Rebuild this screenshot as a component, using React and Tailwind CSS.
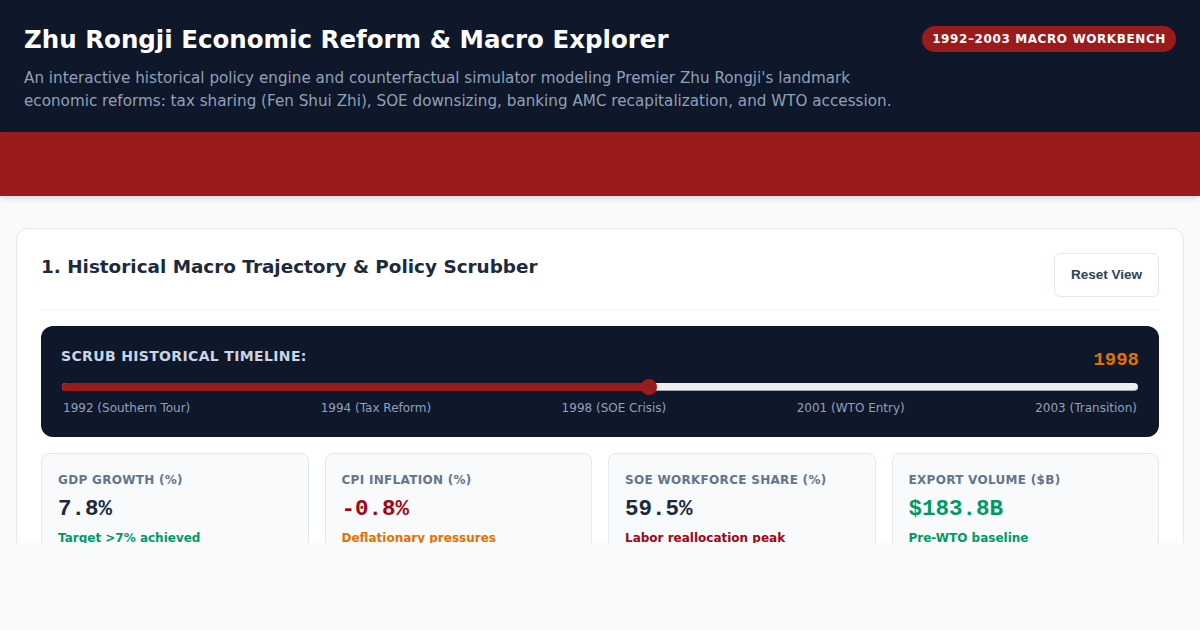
import React, { useState } from "react";

const milestones = [
  "1992 (Southern Tour)",
  "1994 (Tax Reform)",
  "1998 (SOE Crisis)",
  "2001 (WTO Entry)",
  "2003 (Transition)",
];

const metrics = [
  { label: "GDP Growth (%)", value: "7.8%", valueClass: "text-slate-800", note: "Target >7% achieved", noteClass: "text-emerald-600" },
  { label: "CPI Inflation (%)", value: "-0.8%", valueClass: "text-red-800", note: "Deflationary pressures", noteClass: "text-amber-600" },
  { label: "SOE Workforce Share (%)", value: "59.5%", valueClass: "text-slate-800", note: "Labor reallocation peak", noteClass: "text-red-800" },
  { label: "Export Volume ($B)", value: "$183.8B", valueClass: "text-emerald-600", note: "Pre-WTO baseline", noteClass: "text-emerald-600" },
];

const MIN_YEAR = 1992;
const MAX_YEAR = 2003;

function Timeline({ year }) {
  const pct = ((year - MIN_YEAR) / (MAX_YEAR - MIN_YEAR)) * 100;
  return (
    <div className="bg-[#0f172a] rounded-xl px-5 pt-5 pb-[21px]">
      <div className="flex justify-between items-start">
        <span className="text-sm font-bold text-slate-300 tracking-wide uppercase leading-5">
          Scrub Historical Timeline:
        </span>
        <span className="text-[19px] font-bold text-amber-600 leading-7" style={{ fontFamily: '"Liberation Mono", monospace' }}>
          {year}
        </span>
      </div>
      <div className="relative mt-[9px] mx-[1px] h-[8px]">
        <div className="absolute inset-0 rounded-full bg-[#efefef] border-b border-[#9ca3af]" />
        <div className="absolute left-0 top-0 bottom-0 rounded-l-full bg-[#991b1b]" style={{ width: pct + "%" }} />
        <div
          className="absolute top-1/2 w-[16px] h-[16px] -mt-[8px] -ml-[8px] rounded-full bg-[#991b1b]"
          style={{ left: pct + "%" }}
        />
      </div>
      <div className="flex justify-between mt-[9px] px-[2px] text-xs text-slate-400 leading-4">
        {milestones.map((m) => (
          <span key={m}>{m}</span>
        ))}
      </div>
    </div>
  );
}

export default function App() {
  const [year, setYear] = useState(1998);

  return (
    <div className="min-h-screen bg-[#f8fafc]" style={{ fontFamily: '"DejaVu Sans", sans-serif' }}>
      <header className="bg-[#0f172a] px-6 pt-6 pb-[19px] flex justify-between items-start">
        <div>
          <h1 className="text-[24.5px] leading-8 font-bold text-white">
            Zhu Rongji Economic Reform &amp; Macro Explorer
          </h1>
          <p className="mt-[11px] max-w-[880px] text-[15.2px] leading-[23px] text-slate-400">
            An interactive historical policy engine and counterfactual simulator modeling Premier Zhu Rongji's landmark
            economic reforms: tax sharing (Fen Shui Zhi), SOE downsizing, banking AMC recapitalization, and WTO accession.
          </p>
        </div>
        <span className="mt-[2px] shrink-0 rounded-full bg-[#991b1b] px-[10px] h-[26px] flex items-center text-xs font-bold text-white tracking-wider">
          1992–2003 MACRO WORKBENCH
        </span>
      </header>

      <div className="h-16 bg-[#991b1b] shadow-md relative" />

      <main className="h-[347px] overflow-hidden px-4 pt-8">
        <section className="bg-white border border-slate-200 rounded-xl p-6 pt-6">
          <div className="flex justify-between items-start pb-3 border-b border-slate-100">
            <h2 className="text-[18.4px] font-bold text-slate-800 leading-7">
              1. Historical Macro Trajectory &amp; Policy Scrubber
            </h2>
            <button
              onClick={() => setYear(1998)}
              className="h-11 px-4 rounded-md border border-slate-200 bg-white text-[13.5px] font-bold text-slate-700"
              style={{ fontFamily: '"Liberation Sans", Arial, sans-serif' }}
            >
              Reset View
            </button>
          </div>

          <div className="mt-4">
            <Timeline year={year} />
          </div>

          <div className="grid grid-cols-4 gap-4 mt-4">
            {metrics.map((m) => (
              <div key={m.label} className="bg-[#f8fafc] border border-slate-200 rounded-lg px-4 pt-[18px] pb-4">
                <div className="text-xs font-bold text-slate-500 uppercase tracking-wide leading-4">{m.label}</div>
                <div
                  className={"mt-2 text-[22.5px] font-bold leading-[26px] " + m.valueClass}
                  style={{ fontFamily: '"Liberation Mono", monospace' }}
                >
                  {m.value}
                </div>
                <div className={"mt-2 text-xs font-bold leading-4 " + m.noteClass}>{m.note}</div>
              </div>
            ))}
          </div>
        </section>
      </main>
    </div>
  );
}
